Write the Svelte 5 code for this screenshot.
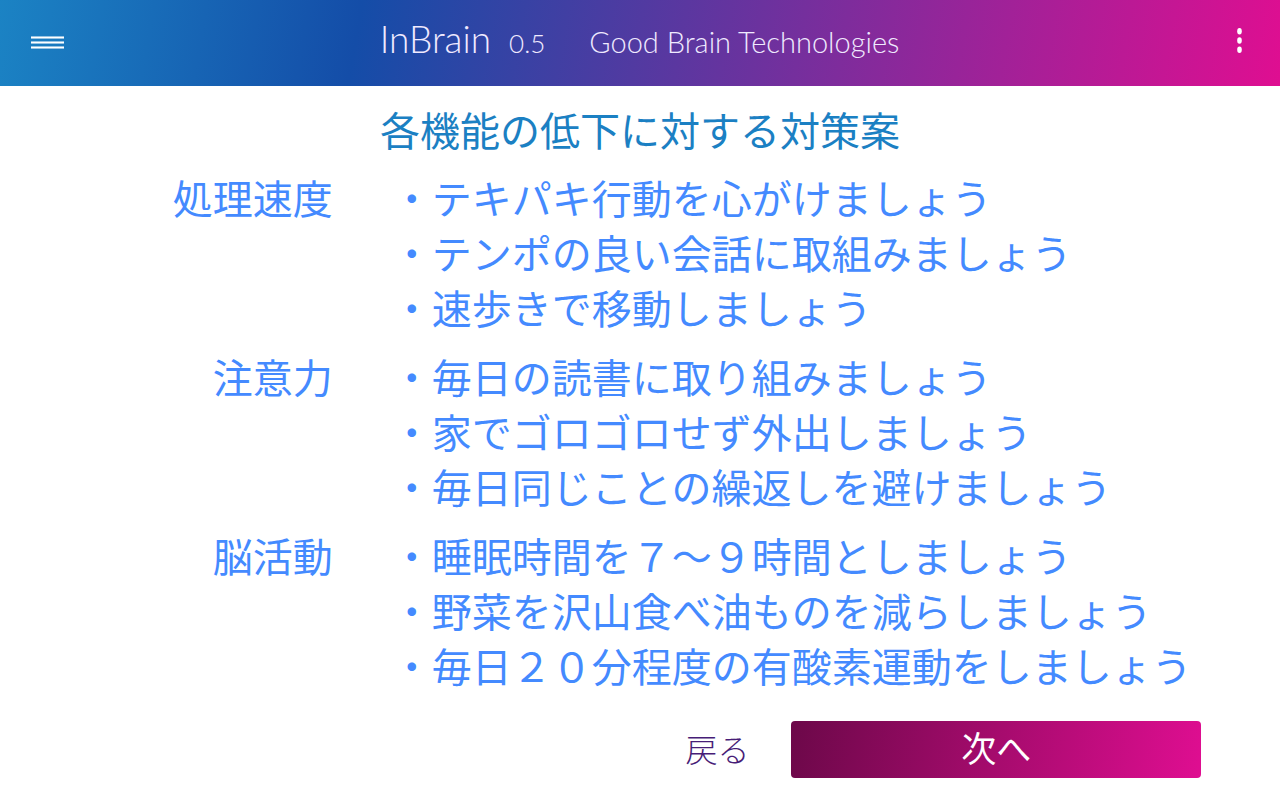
<script>
  const groups = [
    {
      name: '処理速度',
      tips: [
        '・テキパキ行動を心がけましょう',
        '・テンポの良い会話に取組みましょう',
        '・速歩きで移動しましょう',
      ],
    },
    {
      name: '注意力',
      tips: [
        '・毎日の読書に取り組みましょう',
        '・家でゴロゴロせず外出しましょう',
        '・毎日同じことの繰返しを避けましょう',
      ],
    },
    {
      name: '脳活動',
      tips: [
        '・睡眠時間を７〜９時間としましょう',
        '・野菜を沢山食べ油ものを減らしましょう',
        '・毎日２０分程度の有酸素運動をしましょう',
      ],
    },
  ];
</script>

<div class="page" lang="ja">
  <header>
    <button class="icon" aria-label="メニュー">
      <svg width="33" height="13" viewBox="0 0 33 13" aria-hidden="true">
        <g fill="#fff">
          <path opacity=".55" d="M0 0h33v3H0zM0 5h33v3H0zM0 10h33v3H0z" />
          <path d="M0 1h33v1H0zM0 6h33v1H0zM0 11h33v1H0z" />
        </g>
      </svg>
    </button>
    <div class="brand">
      <span class="name">InBrain</span>
      <span class="version">0.5</span>
      <span class="company">Good Brain Technologies</span>
    </div>
    <button class="icon" aria-label="その他">
      <svg width="5" height="25" viewBox="0 0 5 25" aria-hidden="true">
        <g fill="#fff">
          <ellipse cx="2.5" cy="3.2" rx="2.3" ry="3.2" />
          <ellipse cx="2.5" cy="12.5" rx="2.3" ry="3.2" />
          <ellipse cx="2.5" cy="21.8" rx="2.3" ry="3.2" />
        </g>
      </svg>
    </button>
  </header>

  <main>
    <h1>各機能の低下に対する対策案</h1>
    {#each groups as group}
      <section>
        <h2>{group.name}</h2>
        <ul>
          {#each group.tips as tip}
            <li>{tip}</li>
          {/each}
        </ul>
      </section>
    {/each}
  </main>

  <footer>
    <button class="back">戻る</button>
    <button class="next">次へ</button>
  </footer>
</div>

<style>
  :global(body) {
    background: #fff;
  }
  .page {
    font-family: 'Noto Sans CJK JP', sans-serif;
  }
  button {
    border: 0;
    padding: 0;
    background: none;
    font-family: inherit;
    cursor: pointer;
  }
  header {
    display: grid;
    grid-template-columns: 1fr auto 1fr;
    align-items: center;
    height: 86px;
    padding: 0 38px 0 31px;
    box-sizing: border-box;
    background: linear-gradient(100deg, #1b83c4 0%, #144da8 28%, #df0e91 100%);
  }
  .icon {
    display: flex;
    justify-self: start;
    padding-bottom: 2px;
  }
  .icon:last-child {
    justify-self: end;
    padding-bottom: 6px;
  }
  .brand {
    display: flex;
    align-items: baseline;
    padding: 0 0 4px 6px;
    font-family: Lato, sans-serif;
    font-weight: 300;
    line-height: 40px;
    color: #f0eaff;
  }
  .name {
    font-size: 37px;
  }
  .version {
    margin-left: 18px;
    font-size: 26px;
  }
  .company {
    margin-left: 44px;
    font-size: 29px;
  }
  main {
    padding-top: 16px;
  }
  h1,
  h2,
  ul {
    margin: 0;
    padding: 0;
    font-size: 40px;
    font-weight: 400;
    line-height: 55px;
  }
  h1 {
    margin-bottom: 13px;
    text-align: center;
    color: #1b80c3;
  }
  section {
    display: grid;
    grid-template-columns: 26% 1fr;
    column-gap: 59px;
    margin-bottom: 14px;
    color: #448aff;
  }
  h2 {
    text-align: right;
  }
  ul {
    list-style: none;
  }
  footer {
    display: flex;
    justify-content: flex-end;
    align-items: center;
    gap: 42px;
    padding: 14px 79px 22px 0;
  }
  .back {
    padding-bottom: 2px;
    font-size: 32px;
    font-weight: 300;
    line-height: 55px;
    color: #471d77;
  }
  .next {
    width: 32vw;
    padding-bottom: 6px;
    border-radius: 4px;
    background: linear-gradient(100deg, #6c0849, #df0e91);
    font-size: 35px;
    font-weight: 400;
    line-height: 51px;
    color: #fff;
  }
</style>
